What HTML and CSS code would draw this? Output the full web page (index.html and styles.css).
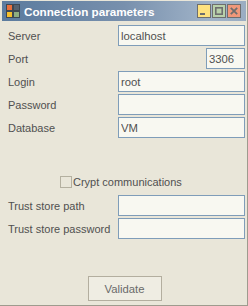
FILE: index.html
```html
<!DOCTYPE html>
<html>
<head>
<meta charset="utf-8">
<link rel="stylesheet" href="styles.css">
</head>
<body>
<div class="window">
  <div class="titlebar">
    <svg class="app-icon" width="14" height="14" viewBox="0 0 14 14">
      <rect x="0" y="0" width="14" height="14" fill="#3e4852"/>
      <rect x="1" y="1" width="5" height="5" fill="#e8703c"/>
      <rect x="8" y="1" width="5" height="5" fill="#56626e"/>
      <rect x="1" y="8" width="5" height="5" fill="#f5c02a"/>
      <rect x="8" y="8" width="5" height="5" fill="#8fae7f"/>
    </svg>
    <span class="title">Connection parameters</span>
    <div class="controls">
      <svg class="ctl" width="14" height="14" viewBox="0 0 14 14">
        <rect x="0.5" y="0.5" width="13" height="13" fill="#ffe27e" stroke="#6e6e6e"/>
        <rect x="3" y="9" width="5" height="2" fill="#6e6e6e"/>
      </svg>
      <svg class="ctl" width="14" height="14" viewBox="0 0 14 14">
        <rect x="0.5" y="0.5" width="13" height="13" fill="#b9d1aa" stroke="#6e6e6e"/>
        <rect x="3.8" y="3.8" width="6.4" height="6.4" fill="none" stroke="#6e6e6e" stroke-width="1.6"/>
      </svg>
      <svg class="ctl" width="14" height="14" viewBox="0 0 14 14">
        <rect x="0.5" y="0.5" width="13" height="13" fill="#f0987a" stroke="#6e6e6e"/>
        <path d="M3.8 3.8 L10.2 10.2 M10.2 3.8 L3.8 10.2" stroke="#6e6e6e" stroke-width="1.8"/>
      </svg>
    </div>
  </div>
  <div class="content">
    <div class="form">
      <div class="row"><span class="label">Server</span><input class="field" value="localhost"></div>
      <div class="row"><span class="label">Port</span><input class="field small" value="3306"></div>
      <div class="row"><span class="label">Login</span><input class="field" value="root"></div>
      <div class="row"><span class="label">Password</span><input class="field" value=""></div>
      <div class="row"><span class="label">Database</span><input class="field" value="VM"></div>
    </div>
    <div class="check-row">
      <span class="checkbox"></span><span class="check-label">Crypt communications</span>
    </div>
    <div class="form">
      <div class="row"><span class="label">Trust store path</span><input class="field" value=""></div>
      <div class="row"><span class="label">Trust store password</span><input class="field" value=""></div>
    </div>
    <div class="actions">
      <button class="btn">Validate</button>
    </div>
  </div>
</div>
</body>
</html>
```
FILE: styles.css
```css
html, body {
  margin: 0;
  padding: 0;
  background: #e9e6d9;
}
.window {
  width: 245px;
  height: 304px;
  background: #e9e6d9;
  border-right: 1px solid #9e9b8e;
  border-bottom: 1px solid #9e9b8e;
  padding: 1px 0 0 2px;
  display: flex;
  flex-direction: column;
  font-family: "Liberation Sans", Arial, sans-serif;
  font-size: 11px;
  color: #505050;
}
.titlebar {
  height: 20px;
  width: 244px;
  display: flex;
  align-items: center;
  background: linear-gradient(to right, #5b7b9e 0%, #7890ad 50%, #a0b3c8 85%, #9aadc2 100%);
  box-sizing: border-box;
  padding-left: 4px;
}
.app-icon {
  display: block;
  flex: none;
}
.title {
  margin-left: 4px;
  color: #ffffff;
  font-weight: bold;
  font-size: 11.7px;
  flex: 1;
}
.controls {
  display: flex;
  gap: 1px;
  padding-right: 5px;
}
.ctl {
  display: block;
}
.content {
  flex: 1;
  display: flex;
  flex-direction: column;
  padding: 4px 2px 0 6px;
}
.form {
  display: flex;
  flex-direction: column;
  gap: 2px;
}
.row {
  display: flex;
  align-items: center;
  height: 21px;
}
.label {
  width: 110px;
  flex: none;
}
.field {
  margin: 0 0 0 auto;
  width: 127px;
  height: 21px;
  box-sizing: border-box;
  border: 1px solid #7f9db9;
  background: #f8f8f1;
  padding: 0 2px;
  font-family: "Liberation Sans", Arial, sans-serif;
  font-size: 11.3px;
  color: #505050;
  outline: none;
}
.field.small {
  width: 39px;
}
.check-row {
  display: flex;
  align-items: center;
  margin-top: 37px;
  padding-left: 52px;
  height: 13px;
}
.checkbox {
  width: 12px;
  height: 12px;
  box-sizing: border-box;
  border: 1px solid #b4b0a0;
  background: #e9e6d9;
  flex: none;
}
.check-label {
  margin-left: 1px;
}
.check-row + .form {
  margin-top: 7px;
}
.actions {
  display: flex;
  justify-content: center;
  margin-top: 37px;
  padding-right: 4px;
}
.btn {
  width: 74px;
  height: 25px;
  border: 1px solid #b3ae9f;
  background: #efede3;
  font-family: "Liberation Sans", Arial, sans-serif;
  font-size: 11.3px;
  color: #6a6a6a;
  padding: 0;
}
```
